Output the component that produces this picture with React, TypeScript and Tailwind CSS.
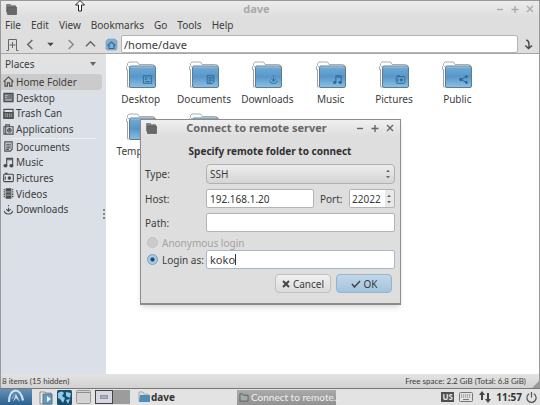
import type { ReactNode } from "react";

type GlyphName =
  | "home" | "desktop" | "trash" | "apps" | "documents"
  | "music" | "pictures" | "videos" | "downloads" | "public";

const glyphs: Record<GlyphName, ReactNode> = {
  home: <path d="M.7 6.2 6 1l5.3 5.2M2.2 5.5V11h2.6V7.5h2.4V11h2.6V5.5" />,
  desktop: (
    <>
      <path d="M1 1.5h10v9H1z" fill="currentColor" fillOpacity=".7" />
      <path d="M2.5 4H5M2.5 6H4M2.5 8.700h7" stroke="#dfe3e8" strokeWidth=".8" />
    </>
  ),
  trash: (
    <>
      <path d="M1 1.500h10V11H1z" />
      <path d="M1 5h10v6H1z" fill="currentColor" fillOpacity=".5" />
      <path d="M3.500 5v6M6 5v6M8.500 5v6" strokeWidth=".9" />
    </>
  ),
  apps: (
    <>
      <path d="M3 3V1h4v2M1 3h10v8H1zM3 3v8" />
      <circle cx="7" cy="7" r="2" />
      <circle cx="7" cy="7" r=".6" fill="currentColor" />
    </>
  ),
  documents: <path d="M2 1h8v8L8 11H2zM3.500 3.500h5M3.500 5.500h5M3.500 7.500h5M3.500 9.200h3" />,
  music: (
    <>
      <path d="M4 9V1.500h6.500V9M4 3h6.500" />
      <ellipse cx="2.700" cy="9.500" rx="1.700" ry="1.300" fill="currentColor" />
      <ellipse cx="9.200" cy="9.500" rx="1.700" ry="1.300" fill="currentColor" />
    </>
  ),
  pictures: (
    <>
      <rect x=".7" y="2.500" width="10.600" height="8" rx="1" />
      <path d="M2 1.500h3M2.500 5v3.500" />
      <circle cx="7" cy="6.500" r="1.300" fill="currentColor" />
    </>
  ),
  videos: (
    <>
      <path d="M3.500 1h5v10h-5z" fill="currentColor" />
      <path d="M1.500 1v10M10.500 1v10" strokeDasharray="1.500 1" strokeWidth="1.600" />
      <path d="M3.500 4.300h5M3.500 7.700h5" stroke="#dfe3e8" strokeWidth=".7" />
    </>
  ),
  downloads: <path d="M6 1v1.500M6 4v4.500M3.500 5.500 6 8l2.500-2.500M1.500 7.500C2 12 10 12 10.500 7.500" />,
  public: (
    <>
      <path d="M9.500 2.500 3 6l6.500 3.500" />
      <circle cx="9.500" cy="2.500" r="1.300" fill="currentColor" />
      <circle cx="2.700" cy="6" r="1.500" fill="currentColor" />
      <circle cx="9.500" cy="9.500" r="1.300" fill="currentColor" />
    </>
  ),
};

function Glyph({ name }: { name: GlyphName }) {
  return (
    <svg viewBox="0 0 12 12" className="size-[11px] shrink-0 text-[#4c4c4c]" fill="none" stroke="currentColor" strokeWidth="1.200" aria-hidden="true">
      {glyphs[name]}
    </svg>
  );
}

function SmallFolder() {
  return (
    <svg viewBox="0 0 12 12" className="size-3 shrink-0" aria-hidden="true">
      <path d="M1.500 9.500V1.500h4l1 1.200h4V4" fill="#858585" stroke="#777" strokeWidth=".8" />
      <path d="M2.500 4H11.500v7.500h-9z" fill="#686868" stroke="#555" strokeWidth=".7" />
    </svg>
  );
}

function BigFolder({ glyph }: { glyph?: GlyphName }) {
  return (
    <svg viewBox="0 0 32 28" className="h-7 w-8" aria-hidden="true">
      <defs>
        <linearGradient id="folder-blue" x1="0" y1="0" x2="0" y2="1">
          <stop offset="0" stopColor="#74acd6" />
          <stop offset=".5" stopColor="#5797c8" />
          <stop offset="1" stopColor="#8dc0e3" />
        </linearGradient>
      </defs>
      <path d="M2.500 26V8.500H1.500V5.500l1-1V2.500L4 1h8.500L14 3.500h13.500q2 0 2 2V25z" fill="#fff" stroke="#a2a2a2" strokeWidth=".9" />
      <path d="M2.500 9v16M3 5.500h9" stroke="#8d8d8d" strokeWidth=".7" strokeDasharray="1 1" />
      <rect x="4.500" y="5" width="26" height="21.500" rx="1.500" fill="url(#folder-blue)" stroke="#54718a" strokeWidth=".9" />
      <path d="M5.500 6h24" stroke="#a9cde7" strokeWidth=".8" />
      {glyph && (
        <svg x="17.500" y="13.500" width="10" height="10" viewBox="0 0 12 12" fill="none" color="#2f6a99" stroke="currentColor" strokeWidth="1.200">
          {glyph === "desktop" ? <path d="M1 1.500h10v9H1zM3 4h3M3 6h2M8 5h1.500M3 8.500h6" /> : glyphs[glyph]}
        </svg>
      )}
    </svg>
  );
}

function WindowControls({ tone }: { tone: string }) {
  const marks = [
    { label: "Minimize", d: "M1 4.500h6" },
    { label: "Maximize", d: "M.5 4.500h7M4 1v7" },
    { label: "Close", d: "m1 1 6 6M7 1 1 7" },
  ];
  return (
    <div className={`flex gap-[7px] ${tone}`}>
      {marks.map((m) => (
        <button key={m.label} type="button" aria-label={m.label}>
          <svg viewBox="0 0 8 8" className="size-2" fill="none" stroke="currentColor" strokeWidth="1.400"><path d={m.d} /></svg>
        </button>
      ))}
    </div>
  );
}

const places: { name: string; glyph: GlyphName }[] = [
  { name: "Home Folder", glyph: "home" },
  { name: "Desktop", glyph: "desktop" },
  { name: "Trash Can", glyph: "trash" },
  { name: "Applications", glyph: "apps" },
];
const bookmarks: { name: string; glyph: GlyphName }[] = [
  { name: "Documents", glyph: "documents" },
  { name: "Music", glyph: "music" },
  { name: "Pictures", glyph: "pictures" },
  { name: "Videos", glyph: "videos" },
  { name: "Downloads", glyph: "downloads" },
];
const folders: { name?: string; glyph?: GlyphName }[] = [
  { name: "Desktop", glyph: "desktop" },
  { name: "Documents", glyph: "documents" },
  { name: "Downloads", glyph: "downloads" },
  { name: "Music", glyph: "music" },
  { name: "Pictures", glyph: "pictures" },
  { name: "Public", glyph: "public" },
  { name: "Templates" },
  { glyph: "videos" },
];

function PlaceRow({ name, glyph, selected = false }: { name: string; glyph: GlyphName; selected?: boolean }) {
  return (
    <a href="#place" className={`mr-1 flex items-center gap-[2px] rounded-r-sm pl-[2px] ${selected ? "bg-[#cbcbcb]" : ""}`}>
      <Glyph name={glyph} />
      {name}
    </a>
  );
}

function Toolbar() {
  const arrows = [
    { label: "Back", d: "M8 1 3 6l5 5" },
    { label: "History", d: "M2.500 4h7L6 8z" },
    { label: "Forward", d: "m4 1 5 5-5 5" },
    { label: "Up", d: "m1 8 5-5 5 5" },
  ];
  return (
    <div className="flex h-[18px] items-center">
      <button type="button" aria-label="New tab" className="ml-[5px] mr-[6px]">
        <svg viewBox="0 0 13 13" className="size-[13px]" fill="none" stroke="#666" strokeWidth="1"><path d="M.5 12.500h2v-11h8v11h2M6.500 4v6M3.500 7h6" /></svg>
      </button>
      <div className="flex gap-[9px]">
        {arrows.map((a) => (
          <button key={a.label} type="button" aria-label={a.label}>
            <svg viewBox="0 0 12 12" className="size-[11px]" fill={a.label === "History" ? "#444" : "none"} stroke={a.label === "Forward" ? "#888" : "#666"} strokeWidth="1.600"><path d={a.d} strokeWidth={a.label === "History" ? 0 : 1.6} /></svg>
          </button>
        ))}
      </div>
      <button type="button" aria-label="Home" className="ml-[9px] mr-[3px]">
        <svg viewBox="0 0 13 13" className="size-[13px]"><path d="M1 3 3 1h7l2 2v8l-1 1H2l-1-1z" fill="#7fb0d6" stroke="#8aa3b5" strokeWidth=".8" /><path d="M2.500 7.500 6.500 4l4 3.500M4 7v3.500h5V7" fill="none" stroke="#34678f" strokeWidth="1.100" /></svg>
      </button>
      <input aria-label="Location" defaultValue="/home/dave" className="h-[18px] min-w-0 flex-1 rounded-xs border border-[#b4b4b4] bg-white px-[2px] text-[11px] outline-none" />
      <button type="button" aria-label="Go to location" className="flex w-[21px] justify-center">
        <svg viewBox="0 0 10 12" className="h-[11px] w-[9px]" fill="none" stroke="#444" strokeWidth="1.500"><path d="M2.500 1q3.500 1 3 6M5.500 4v6.500M1.500 7 5 10.500 9 7" /></svg>
      </button>
    </div>
  );
}

const field = "h-[19px] w-full min-w-0 rounded-xs border border-[#b3b3b3] bg-white px-[3px] text-[#333] outline-none";
const actionButton = "flex h-[19px] w-[56px] items-center justify-center gap-[3px] rounded-sm border";

function SpinArrows() {
  return (
    <svg viewBox="0 0 8 12" className="h-3 w-2" fill="#666" aria-hidden="true"><path d="M2 4 4 1.800 6 4zM2 8 4 10.200 6 8z" /></svg>
  );
}

function ConnectDialog() {
  return (
    <section role="dialog" aria-labelledby="dialog-title" className="absolute left-[140px] top-[119px] w-[261px] border border-b-2 border-[#8c8c8c] bg-[#dedede] pb-[10px] shadow-md">
      <header className="flex h-4 items-center bg-linear-to-b from-[#f0f0f0] to-[#dedede] pl-1 pr-[6px]">
        <SmallFolder />
        <h2 id="dialog-title" className="flex-1 text-center text-[11px] font-bold text-[#666]">Connect to remote server</h2>
        <WindowControls tone="text-[#666]" />
      </header>
      <form className="pl-1 pr-[5px]">
        <p className="pb-1 pt-[7px] text-center font-bold leading-[17px] text-[#303030]">Specify remote folder to connect</p>
        <div className="grid grid-cols-[61px_1fr] items-center gap-y-[5px]">
          <label htmlFor="type">Type:</label>
          <div className="relative">
            <select id="type" className="h-5 w-full appearance-none rounded-sm border border-[#b0b0b0] bg-linear-to-b from-[#ededed] to-[#d5d5d5] px-[3px] outline-none">
              <option>SSH</option>
            </select>
            <span className="pointer-events-none absolute right-[3px] top-1"><SpinArrows /></span>
          </div>
          <label htmlFor="host">Host:</label>
          <div className="flex items-center">
            <input id="host" defaultValue="192.168.1.20" className={field} />
            <label htmlFor="port" className="w-[35px] shrink-0 pl-[6px]">Port:</label>
            <div className="flex h-[19px] w-[46px] shrink-0 items-center rounded-xs border border-[#b3b3b3] bg-[#e8e8e8]">
              <input id="port" inputMode="numeric" defaultValue="22022" className="h-[17px] w-[35px] bg-white pl-[2px] outline-none" />
              <button type="button" aria-label="Change port"><SpinArrows /></button>
            </div>
          </div>
          <label htmlFor="path">Path:</label>
          <input id="path" className={field} />
        </div>
        <label className="flex h-[18px] items-center gap-1 pt-[3px] text-[#a3a3a3]">
          <input type="radio" name="login" disabled className="ml-[2px] size-[11px] appearance-none rounded-full border border-[#c2c2c2] bg-[#cbcbcb]" />
          Anonymous login
        </label>
        <div className="grid grid-cols-[61px_1fr] items-center">
          <label className="flex items-center gap-1 whitespace-nowrap">
            <input type="radio" name="login" defaultChecked className="ml-[2px] size-[11px] shrink-0 appearance-none rounded-full border border-[#7c9db8] bg-[radial-gradient(circle,#1f4c73_25%,#a5cbe8_40%)]" />
            Login as:
          </label>
          <div className="flex h-[19px] items-center rounded-xs border border-[#a9b6d0] bg-white pl-[3px]">
            <input aria-label="User name" defaultValue="koko" className="h-[17px] text-[11px] outline-none [field-sizing:content]" />
            <span className="h-[11px] w-px bg-[#333]" />
          </div>
        </div>
        <div className="flex justify-end gap-[5px] pr-[3px] pt-[5px]">
          <button type="button" className={`${actionButton} border-[#c0c0c0] bg-linear-to-b from-[#f1f1f1] to-[#dadada]`}>
            <svg viewBox="0 0 8 8" className="size-2" fill="none" stroke="#444" strokeWidth="2"><path d="m1 1 6 6M7 1 1 7" /></svg>
            Cancel
          </button>
          <button type="button" className={`${actionButton} border-[#9bb2c5] bg-linear-to-b from-[#bfd7ea] to-[#a2c4df]`}>
            <svg viewBox="0 0 10 8" className="h-2 w-[10px]" fill="none" stroke="#444" strokeWidth="1.500"><path d="m1 4 2.500 3L9 1" /></svg>
            OK
          </button>
        </div>
      </form>
    </section>
  );
}

function Taskbar() {
  return (
    <footer className="flex h-[17px] shrink-0 items-center border-t border-[#777] bg-[#e3e3e3] text-[#333]">
      <button type="button" aria-label="Menu" className="flex h-full w-8 justify-center bg-linear-to-b from-[#6791b4] to-[#286193]">
        <svg viewBox="0 0 20 16" className="h-4 w-5" fill="none"><path d="M3 13Q3 3 9 1.500q6 0 8 10" stroke="#d3e2ed" strokeWidth="2.200" /><path d="m10 5 4 8-4-4-3 4z" fill="#d3e2ed" /><path d="M6 10q1-4 4-5" stroke="#9fbdd4" /></svg>
      </button>
      <button type="button" aria-label="File manager" className="ml-[7px]">
        <svg viewBox="0 0 15 15" className="size-[15px]"><path d="M1 2h5l1 1h5v11H1z" fill="#eee" stroke="#888" /><path d="M4 4h9v10H4z" fill="#6699bd" stroke="#52748f" /><path d="m8 6 4 3-4 3z" fill="#eef5fa" /></svg>
      </button>
      <button type="button" aria-label="Web browser" className="ml-[3px]">
        <svg viewBox="0 0 15 15" className="size-[15px]"><rect width="15" height="15" rx="1.500" fill="#174e70" /><path d="M1 3q4-3 6 0L5 6l3 2-2 5-3-4-2-1zM9 2l5 1-1 5-4-2zM9 10l4-1-2 5z" fill="#91cbe3" /></svg>
      </button>
      <button type="button" aria-label="Show desktop" className="ml-1">
        <svg viewBox="0 0 15 15" className="size-[15px]"><rect x=".5" y=".5" width="14" height="13" rx="1" fill="#d4d4d4" stroke="#999" /><path d="M1 2.500h13" stroke="#8d8d8d" /></svg>
      </button>
      <button type="button" aria-label="Workspace 1" className="ml-1 flex h-[14px] w-[18px] items-center justify-center border border-[#444] bg-[#d7d7df]"><span className="h-1 w-2 border border-[#9097a5] bg-[#a8afbc]" /></button>
      <button type="button" aria-label="Workspace 2" className="h-[14px] w-[17px] bg-[#9c9c9c]" />
      <button type="button" className="ml-2 flex h-4 w-[99px] items-center gap-px font-bold">
        <svg viewBox="0 0 12 12" className="size-3"><path d="M1 10V1h4l1 2h4v7" fill="#ddd" stroke="#aaa" /><path d="M2 4h10v7H1z" fill="#4f8cb8" /></svg>
        dave
      </button>
      <button type="button" className="flex h-[15px] w-[99px] items-center gap-[2px] whitespace-nowrap bg-linear-to-b from-[#aaa] to-[#929292] pl-[2px] font-['Lato',sans-serif] text-[#f0f0f0]">
        <svg viewBox="0 0 11 10" className="h-[9px] w-[10px] shrink-0" fill="#a3aaa7" stroke="#56615e"><path d="M1 9V1h3l1 1.500h5V9z" /></svg>
        Connect to remote...
      </button>
      <div className="ml-auto flex items-center gap-1 pr-[3px]">
        <span className="flex h-[10px] w-[13px] items-center justify-center bg-[#505050] text-[8px] font-bold leading-[10px] text-[#e5e5e5]">US</span>
        <svg viewBox="0 0 14 10" className="ml-px h-[10px] w-[14px]" fill="none" stroke="#777" aria-hidden="true"><rect x=".5" y=".5" width="13" height="9" rx="1" /><path d="M2 3h10M2 5h10" strokeDasharray="1.200 .8" /><path d="M4 7.500h6" /></svg>
        <svg viewBox="0 0 14 12" className="ml-px h-3 w-[14px]" fill="#444" aria-hidden="true"><path d="M3 9V4H1L4 0l3 4H5v5zM9 2v6H7l3 4 3-4h-2V2z" /></svg>
        <time className="font-bold">11:57</time>
        <svg viewBox="0 0 12 12" className="size-[11px]" fill="none" stroke="#555" strokeWidth="1.300" aria-hidden="true"><path d="M3.500 2a5 5 0 1 0 5 0M6 0v6" /></svg>
      </div>
    </footer>
  );
}

export default function App() {
  return (
    <div className="relative flex h-screen flex-col overflow-hidden bg-[#dedede] font-['Noto_Sans',sans-serif] text-[10px] leading-[14px] text-[#3c3c3c]">
      <main className="flex min-h-0 flex-1 flex-col border-x border-t border-[#999]">
        <header className="flex h-[15px] shrink-0 items-center bg-linear-to-b from-[#ececec] to-[#dfdfdf] pl-1 pr-[5px]">
          <SmallFolder />
          <h1 className="flex-1 text-center text-[11px] font-bold text-[#aaa]">dave</h1>
          <WindowControls tone="text-[#aaa]" />
        </header>
        <nav className="mb-[2px] flex h-[17px] shrink-0 items-center gap-[10px] pl-1">
          {["File", "Edit", "View", "Bookmarks", "Go", "Tools", "Help"].map((m) => <button key={m} type="button">{m}</button>)}
        </nav>
        <div className="shrink-0 border-b border-[#a6a6a6]"><Toolbar /></div>
        <div className="flex min-h-0 flex-1">
          <aside className="relative w-[105px] shrink-0 bg-linear-to-b from-[#e2e2e2] via-[#dbe0e7] via-15% to-[#dbe0e8]">
            <button type="button" className="flex h-5 w-full items-center justify-between pl-1 pr-[10px]">
              Places
              <svg viewBox="0 0 6 4" className="h-1 w-[6px]" fill="#666"><path d="M0 0h6L3 4z" /></svg>
            </button>
            <div className="grid h-[63px] grid-rows-4">
              {places.map((p) => <PlaceRow key={p.name} {...p} selected={p.name === "Home Folder"} />)}
            </div>
            <hr className="mx-[10px] mt-px border-[#eceff2]" />
            <div className="grid h-[78px] grid-rows-5">
              {bookmarks.map((p) => <PlaceRow key={p.name} {...p} />)}
            </div>
            <svg viewBox="0 0 2 10" className="absolute right-px top-[155px] h-[10px] w-[2px]" fill="#888" aria-hidden="true"><path d="M0 0h2v2H0zM0 4h2v2H0zM0 8h2v2H0z" /></svg>
          </aside>
          <div className="flex-1 bg-white pl-[3px] pr-[50px] pt-[7px]">
            <div className="grid grid-cols-6 gap-y-[7px]">
              {folders.map((f) => (
                <button key={f.name ?? f.glyph} type="button" className="flex h-[45px] flex-col items-center gap-[3px]">
                  <BigFolder glyph={f.glyph} />
                  {f.name}
                </button>
              ))}
            </div>
          </div>
        </div>
        <div className="flex h-[14px] shrink-0 items-center bg-linear-to-b from-[#e3e3e3] to-[#d2d2d2] pl-px font-['Lato',sans-serif] text-[8px]">
          <span>8 items (15 hidden)</span>
          <span className="ml-auto">Free space: 2.2 GiB (Total: 6.8 GiB)</span>
          <svg viewBox="0 0 7 7" className="ml-[6px] size-[7px] self-end" fill="#999" aria-hidden="true"><path d="M7 0v7H0z" /></svg>
        </div>
      </main>
      <Taskbar />
      <ConnectDialog />
      <svg viewBox="0 0 12 12" className="absolute left-[74px] top-0 h-3 w-3" fill="#fff" stroke="#222" aria-hidden="true"><path d="M4.500 11V5H1.500L6 .5 10.500 5h-3v6z" /></svg>
    </div>
  );
}
